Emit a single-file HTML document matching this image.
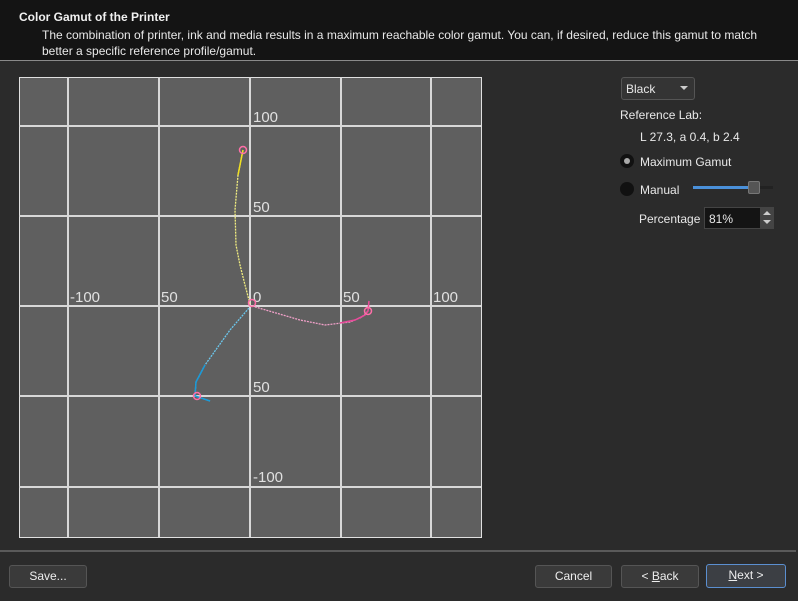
<!DOCTYPE html>
<html><head><meta charset="utf-8"><style>
*{margin:0;padding:0;box-sizing:border-box}
body{width:798px;height:601px;background:#2b2b2b;font-family:"Liberation Sans",sans-serif;color:#e8e8e8;font-size:12px;position:relative;overflow:hidden}
.hdr{position:absolute;left:0;top:0;width:798px;height:61px;background:#141414;border-bottom:1px solid #8a8a8a}
.t{position:absolute;left:19px;top:10px;font-weight:bold;font-size:12px;color:#f0f0f0}
.d{position:absolute;left:42px;top:27px;font-size:12px;line-height:16px;color:#e8e8e8;width:740px}
.a{position:absolute}
.btn{position:absolute;height:23px;border:1px solid #555;border-radius:3px;background:#3a3a3a;color:#eee;text-align:center;line-height:21px;font-size:12px}
</style></head><body>
<div class="hdr"><div class="t">Color Gamut of the Printer</div>
<div class="d">The combination of printer, ink and media results in a maximum reachable color gamut. You can, if desired, reduce this gamut to match better a specific reference profile/gamut.</div></div>

<svg class="a" style="left:0;top:0" width="798" height="601">
<rect x="19.5" y="77.5" width="462" height="460" fill="#5f5f5f" stroke="#e0e0e0" stroke-width="1"/>
<g stroke="#d8d8d8" stroke-width="2">
<line x1="68" y1="77" x2="68" y2="537"/><line x1="159" y1="77" x2="159" y2="537"/><line x1="250" y1="77" x2="250" y2="537"/><line x1="341" y1="77" x2="341" y2="537"/><line x1="431" y1="77" x2="431" y2="537"/>
<line x1="19" y1="126" x2="481" y2="126"/><line x1="19" y1="216" x2="481" y2="216"/><line x1="19" y1="306" x2="481" y2="306"/><line x1="19" y1="396" x2="481" y2="396"/><line x1="19" y1="487" x2="481" y2="487"/>
</g>
<g fill="#e0e0e0" font-family="Liberation Sans" font-size="15">
<text x="253" y="122">100</text><text x="253" y="212">50</text>
<text x="70" y="302">-100</text><text x="161" y="302">50</text><text x="253" y="302">0</text><text x="343" y="302">50</text><text x="433" y="302">100</text>
<text x="253" y="392">50</text><text x="253" y="482">-100</text>
</g>
<path d="M250,304 L245,285 L240,265 L236,245 L235,210 L238,175 L243,150" fill="none" stroke="#f2ee80" stroke-width="1.3" stroke-dasharray="2 1"/>
<path d="M238,175 L243,150" stroke="#f0e020" stroke-width="1.5"/>
<path d="M252,306 L300,320 L325,325 L350,322 L362,317 L368,311 L369,301" fill="none" stroke="#f0a0c8" stroke-width="1.3" stroke-dasharray="2 1"/>
<path d="M340,323 L355,320 L365,315 L368,311 L369,301" fill="none" stroke="#e84a9a" stroke-width="1.5"/>
<path d="M249,308 L230,330 L205,365 L196,382 L195,396 L210,401" fill="none" stroke="#6cc8ee" stroke-width="1.3" stroke-dasharray="2 1"/>
<path d="M205,365 L196,382 L195,396 L210,401" fill="none" stroke="#1a9ad8" stroke-width="1.5"/>
<g fill="none" stroke="#ff6fa8" stroke-width="1.5"><circle cx="243" cy="150" r="3.5"/><circle cx="252" cy="303" r="3.5"/><circle cx="368" cy="311" r="3.5"/><circle cx="197" cy="396" r="3.5"/></g>
<line x1="0" y1="551" x2="796" y2="551" stroke="#8a8a8a" stroke-width="1"/>
</svg>

<div class="a" style="left:621px;top:77px;width:74px;height:23px;border:1px solid #555;border-radius:3px;background:#343434"><span class="a" style="left:4px;top:4px;font-size:12px">Black</span><span class="a" style="left:58px;top:8px;width:0;height:0;border-left:4px solid transparent;border-right:4px solid transparent;border-top:4px solid #ccc"></span></div>
<div class="a" style="left:620px;top:108px">Reference Lab:</div>
<div class="a" style="left:640px;top:130px">L 27.3, a 0.4, b 2.4</div>
<div class="a" style="left:620px;top:154px;width:14px;height:14px;border-radius:50%;background:#111"><div class="a" style="left:4px;top:4px;width:6px;height:6px;border-radius:50%;background:#aaa"></div></div>
<div class="a" style="left:640px;top:155px">Maximum Gamut</div>
<div class="a" style="left:620px;top:182px;width:14px;height:14px;border-radius:50%;background:#111"></div>
<div class="a" style="left:640px;top:183px">Manual</div>
<div class="a" style="left:693px;top:186px;width:60px;height:3px;background:#4a90d9"></div>
<div class="a" style="left:753px;top:186px;width:20px;height:3px;background:#222"></div>
<div class="a" style="left:748px;top:181px;width:12px;height:13px;background:#555;border:1px solid #777;border-radius:2px"></div>
<div class="a" style="left:639px;top:212px">Percentage</div>
<div class="a" style="left:704px;top:207px;width:70px;height:22px;background:#141414;border:1px solid #444"><span class="a" style="left:4px;top:4px">81%</span><div class="a" style="left:55px;top:0;width:14px;height:20px;background:#444"><span class="a" style="left:3px;top:3px;border-left:4px solid transparent;border-right:4px solid transparent;border-bottom:4px solid #ccc"></span><span class="a" style="left:3px;top:12px;border-left:4px solid transparent;border-right:4px solid transparent;border-top:4px solid #ccc"></span></div></div>

<div class="btn" style="left:9px;top:565px;width:78px">Save...</div>
<div class="btn" style="left:535px;top:565px;width:77px">Cancel</div>
<div class="btn" style="left:621px;top:565px;width:78px">&lt; <u>B</u>ack</div>
<div class="btn" style="left:706px;top:564px;width:80px;height:24px;border-color:#5b8fd0;background:#3c3f44">  <u>N</u>ext &gt;</div>
</body></html>
